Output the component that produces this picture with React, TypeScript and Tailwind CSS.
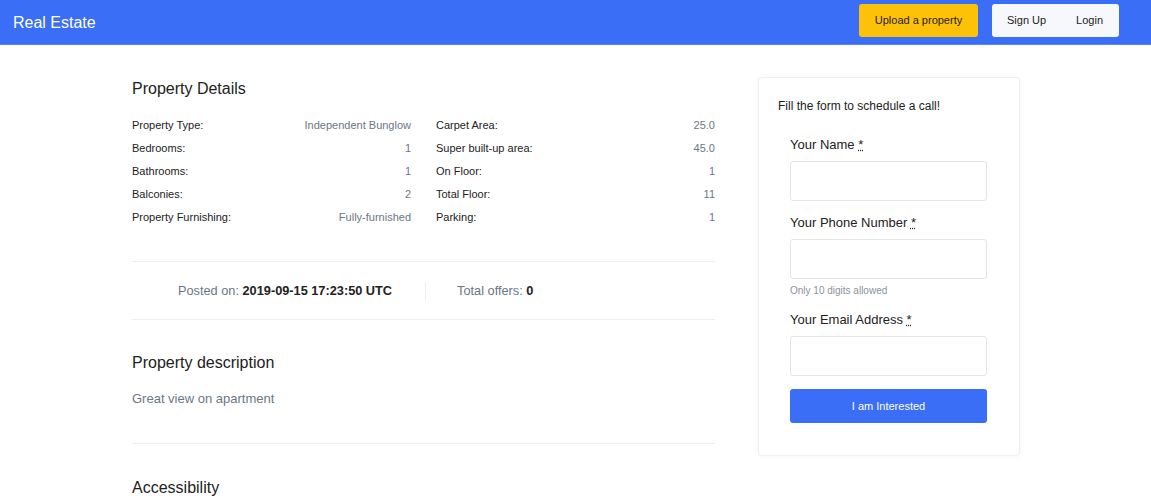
import { ReactNode } from 'react';

const details: [string, string][] = [
  ['Property Type:', 'Independent Bunglow'],
  ['Bedrooms:', '1'],
  ['Bathrooms:', '1'],
  ['Balconies:', '2'],
  ['Property Furnishing:', 'Fully-furnished'],
];

const details2: [string, string][] = [
  ['Carpet Area:', '25.0'],
  ['Super built-up area:', '45.0'],
  ['On Floor:', '1'],
  ['Total Floor:', '11'],
  ['Parking:', '1'],
];

const DetailList = ({ rows }: { rows: [string, string][] }) => (
  <div className="flex flex-col gap-[7px]">
    {rows.map(([label, value]) => (
      <div key={label} className="flex justify-between text-[11px] leading-4">
        <span className="text-[#222]">{label}</span>
        <span className="text-[#6b7785]">{value}</span>
      </div>
    ))}
  </div>
);

const Field = ({ label, hint, className = '' }: { label: string; hint?: ReactNode; className?: string }) => (
  <div className={`flex flex-col ${className}`}>
    <label className="text-[13px] leading-4 text-[#222] mb-[8px]">
      {label} <span className="underline decoration-dotted">*</span>
    </label>
    <input className="h-10 w-full rounded-[3px] border border-[#e3e5e8] bg-white outline-none" />
    {hint && <span className="mt-[6px] text-[10px] leading-3 text-[#8a939d]">{hint}</span>}
  </div>
);

export default function App() {
  return (
    <div className="min-h-[500px] bg-white font-['Liberation_Sans',Arial,sans-serif]">
      {/* Navbar */}
      <nav className="flex h-[45px] items-start justify-between border-b border-[#5a86f5] bg-[#3b6ef7] pl-[13px] pr-[32px] pt-[4px]">
        <span className="mt-[7px] text-[16px] text-white">Real Estate</span>
        <div className="flex items-center gap-[14px]">
          <button className="h-[33px] w-[119px] rounded-[3px] bg-[#fdc107] text-[11px] text-[#222]">
            Upload a property
          </button>
          <div className="flex h-[33px] w-[127px] items-center justify-between rounded-[3px] bg-[#f6f8fb] px-[15px] text-[11px] text-[#222]">
            <span>Sign Up</span>
            <span className="pr-[1px]">Login</span>
          </div>
        </div>
      </nav>

      <div className="flex gap-[43px] pl-[132px]">
        {/* Main column */}
        <main className="w-[583px] pt-[34px]">
          <h2 className="text-[16px] leading-5 text-[#222]">Property Details</h2>
          <div className="mt-[18px] grid grid-cols-2 gap-[25px]">
            <DetailList rows={details} />
            <DetailList rows={details2} />
          </div>

          <div className="mt-[36px] flex h-[59px] items-center border-y border-[#eceef0] pl-[46px] text-[12.75px]">
            <span className="text-[#6b7785]">
              Posted on: <b className="text-[#222]">2019-09-15 17:23:50 UTC</b>
            </span>
            <span className="ml-[33px] mr-[31px] h-[18px] w-px bg-[#eceef0]" />
            <span className="text-[#6b7785]">
              Total offers: <b className="text-[#222]">0</b>
            </span>
          </div>

          <h2 className="mt-[33px] text-[16px] leading-5 text-[#222]">Property description</h2>
          <p className="mt-[18px] text-[13px] leading-4 text-[#6b7785]">Great view on apartment</p>
          <div className="mt-[36px] border-t border-[#eceef0]" />
          <h2 className="mt-[34px] text-[16px] leading-5 text-[#222]">Accessibility</h2>
        </main>

        {/* Form card */}
        <aside className="mt-[32px] h-[379px] w-[262px] rounded-[4px] border border-[#edeff2] bg-white px-[19px] pt-[20px] shadow-[0_0_6px_rgba(0,0,0,0.04)]">
          <p className="text-[12px] leading-4 text-[#222]">Fill the form to schedule a call!</p>
          <div className="mt-[23px] flex flex-col pl-[12px] pr-[13px]">
            <Field label="Your Name" />
            <Field label="Your Phone Number" hint="Only 10 digits allowed" className="mt-[14px]" />
            <Field label="Your Email Address" className="mt-[15px]" />
            <button className="mt-[13px] h-[34px] w-full rounded-[3px] bg-[#3b6ef7] text-[11px] text-white">
              I am Interested
            </button>
          </div>
        </aside>
      </div>
    </div>
  );
}
